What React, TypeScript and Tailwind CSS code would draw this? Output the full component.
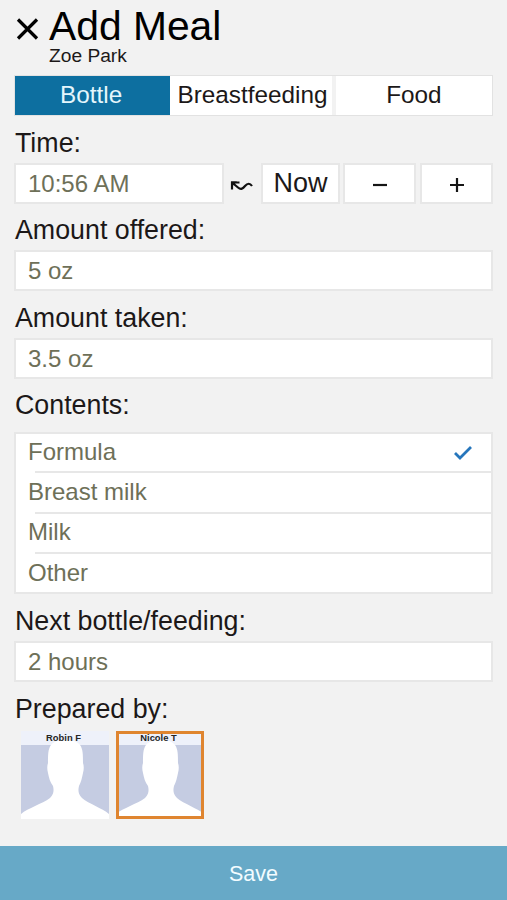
import { useState } from "react";

const TABS = [
  { label: "Bottle", width: "w-[156px]" },
  { label: "Breastfeeding", width: "w-[166px]" },
  { label: "Food", width: "w-[157px]" },
];

const CONTENTS = ["Formula", "Breast milk", "Milk", "Other"];
const STAFF = ["Robin F", "Nicole T"];

function Label({ children, className = "mt-3" }: { children: string; className?: string }) {
  return (
    <div className={`${className} h-[35px] pl-px text-[26.8px] leading-[30px] whitespace-nowrap text-[#1c1818]`}>
      {children}
    </div>
  );
}

function Field({ value, className = "" }: { value: string; className?: string }) {
  return (
    <div
      className={`${className} h-[41px] border-2 border-[#e7e7e7] bg-white pl-[12px] text-[24px] leading-[37px] whitespace-nowrap text-[#6e7058]`}
    >
      {value}
    </div>
  );
}

function StepButton({ kind }: { kind: "minus" | "plus" }) {
  return (
    <button className="flex h-[41px] w-[73px] items-center justify-center border-2 border-[#e7e7e7] bg-white pt-[3px]">
      <svg width="14" height="14" viewBox="0 0 14 14" stroke="#151515" strokeWidth="2.2">
        <path d={kind === "plus" ? "M0 7H14M7 0V14" : "M0 7H14"} />
      </svg>
    </button>
  );
}

function Avatar({ name, selected, onClick }: { name: string; selected: boolean; onClick: () => void }) {
  return (
    <button onClick={onClick} className="relative h-[88px] w-[88px]">
      <svg width="88" height="88" viewBox="0 0 88 88" className="block">
        <rect width="88" height="88" fill="#c5cce2" />
        <rect width="88" height="14" fill="#eef1fa" />
        <path
          d="M0 88V83C7 77 21 73 29 67C33 63 33 59 32 55C29 51 28 47 27 42C26 38 26 35 27 32C27 24 27 18 30 14C35 7 54 7 59 14C62 18 62 24 62 32C63 35 63 38 62 42C61 47 60 51 58 55C57 59 57 63 61 67C68 73 81 77 88 83V88Z"
          fill="#fff"
        />
      </svg>
      <span className="absolute top-0 left-0 w-full pr-[3px] text-center text-[9.4px] leading-[14px] font-bold text-[#252525]">
        {name}
      </span>
      {selected && <span className="absolute inset-0 border-[3px] border-[#df8530]" />}
    </button>
  );
}

export default function App() {
  const [tab, setTab] = useState("Bottle");
  const [content, setContent] = useState("Formula");
  const [staff, setStaff] = useState("Nicole T");

  return (
    <div className="flex h-[900px] w-[507px] flex-col overflow-hidden bg-[#f2f2f2] font-['Liberation_Sans',Arial,sans-serif] text-black">
      <main className="flex-1 px-[14px]">
        <header className="flex h-[75px] items-start">
          <button className="w-[35px] pt-[18px] pl-[2px]">
            <svg width="23" height="23" viewBox="0 0 23 23" fill="none" stroke="#000" strokeWidth="3.2">
              <path d="M2 1.5L21 20.5M21 1.5L2 20.5" />
            </svg>
          </button>
          <div className="whitespace-nowrap">
            <h1 className="mt-[6px] h-[41px] text-[40.8px] leading-[41px]">Add Meal</h1>
            <p className="text-[19.2px] leading-[18px] text-[#1c1818]">Zoe Park</p>
          </div>
        </header>

        {/* Meal type */}
        <div className="flex h-[41px] border border-[#e2e2e2] bg-white">
          {TABS.map((t) => (
            <button
              key={t.label}
              onClick={() => setTab(t.label)}
              className={`${t.width} pb-px text-center text-[24.3px] leading-[38px] ${
                tab === t.label ? "bg-[#0d6fa0] pr-[3px] text-[#e4f6fc]" : "text-[#1c1818]"
              } ${t.label === "Breastfeeding" ? "border-r-4 border-[#f2f2f2] pl-[3px]" : ""}`}
            >
              {t.label}
            </button>
          ))}
        </div>

        <Label>Time:</Label>
        <div className="flex">
          <Field value="10:56 AM" className="w-[210px]" />
          <div className="flex w-[37px] items-center justify-center pt-1 pr-[2px]">
            <svg width="23" height="12" viewBox="0 0 23 12" fill="none" stroke="#111" strokeWidth="2.2">
              <path d="M9.5 2.5H2V9.5M2 2.5L8 7.5C11 10 13 8.5 15 6C17.500 3 20 3 22 6" />
              <path d="M1 1.500H7L1 7.500Z" fill="#111" stroke="none" />
            </svg>
          </div>
          <button className="h-[41px] w-[79px] border-2 border-[#e7e7e7] bg-white text-[27px] leading-[37px] text-[#1c1818]">
            Now
          </button>
          <div className="ml-[3px] flex gap-1">
            <StepButton kind="minus" />
            <StepButton kind="plus" />
          </div>
        </div>

        <Label className="mt-[11px]">Amount offered:</Label>
        <Field value="5 oz" />
        <Label>Amount taken:</Label>
        <Field value="3.5 oz" />

        <Label className="mt-[11px] mb-[7px]">Contents:</Label>
        <ul className="h-[162px] border-2 border-[#e7e7e7] bg-white text-[24px] text-[#6e7058]">
          {CONTENTS.map((c, i) => (
            <li key={c} onClick={() => setContent(c)} className={`flex flex-col ${i === 0 ? "h-[39px]" : "h-[40.5px]"}`}>
              <div className="flex h-[37px] items-center justify-between pr-[19px] pl-[12px] leading-[33px]">
                <span className={i === 0 ? "-mt-[3px]" : "-mt-px"}>{c}</span>
                {content === c && (
                  <svg width="18" height="14" viewBox="0 0 18 14" fill="none" stroke="#2676bc" strokeWidth="2.8">
                    <path d="M1 7L6 12L17 1" />
                  </svg>
                )}
              </div>
              {i < CONTENTS.length - 1 && <div className="mt-auto ml-[19px] h-[2px] bg-[#e7e7e7]" />}
            </li>
          ))}
        </ul>

        <Label>Next bottle/feeding:</Label>
        <Field value="2 hours" />

        <Label>Prepared by:</Label>
        <div className="mt-[2px] ml-[7px] flex gap-[7px]">
          {STAFF.map((s) => (
            <Avatar key={s} name={s} selected={staff === s} onClick={() => setStaff(s)} />
          ))}
        </div>
      </main>

      <button className="h-[54px] shrink-0 bg-[#67a9c7] pt-[2px] text-[21.5px] text-[#f3fcff]">Save</button>
    </div>
  );
}
